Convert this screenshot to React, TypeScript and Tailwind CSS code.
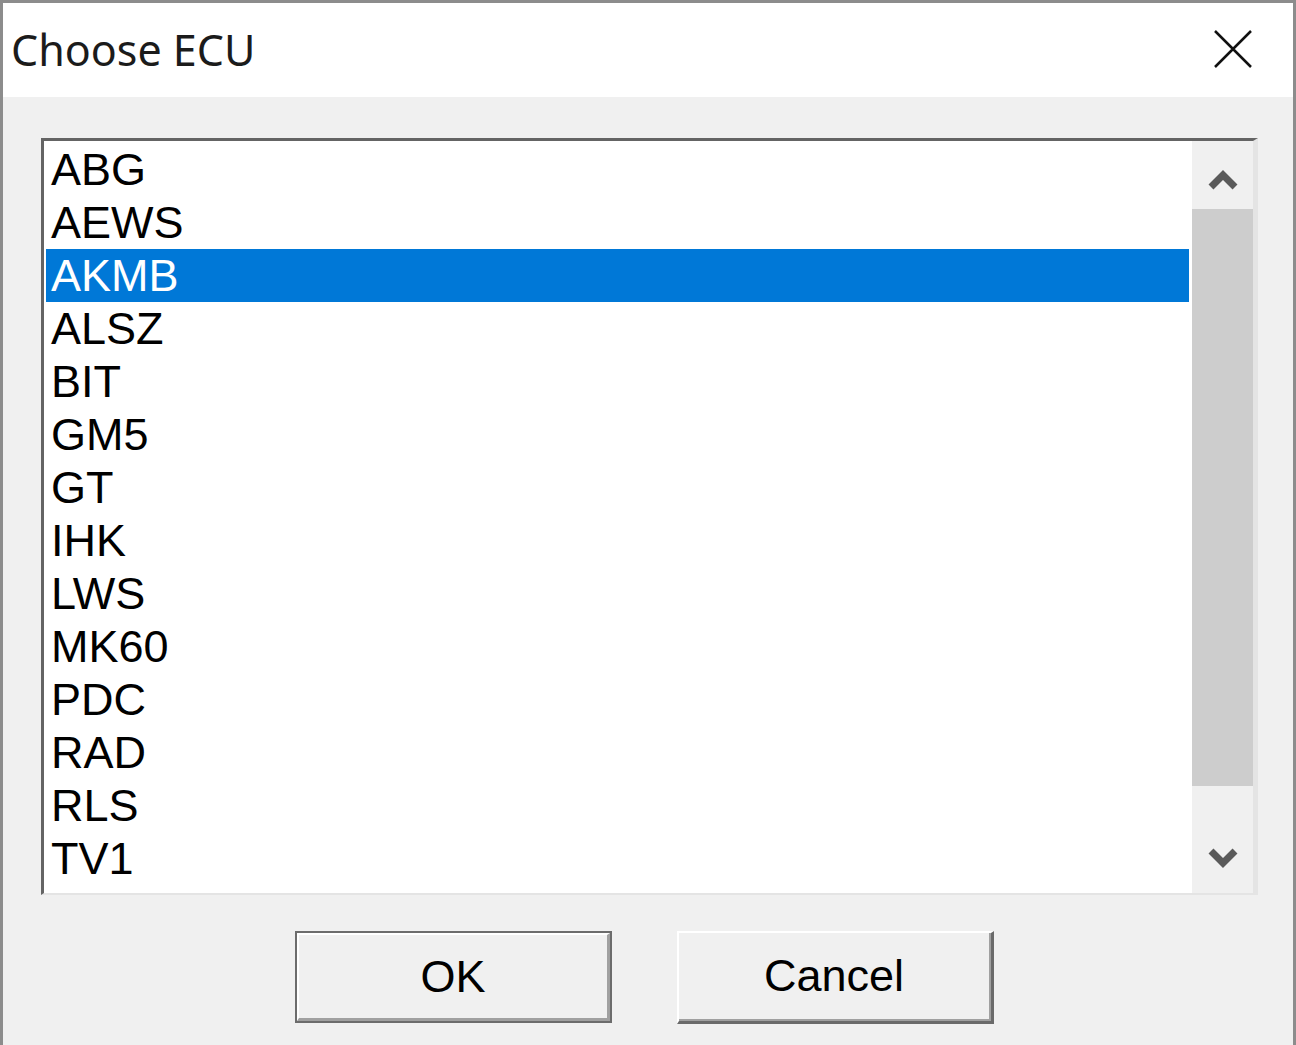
import React from 'react';

const ECUS = ['ABG', 'AEWS', 'AKMB', 'ALSZ', 'BIT', 'GM5', 'GT', 'IHK', 'LWS', 'MK60', 'PDC', 'RAD', 'RLS', 'TV1'];

function Chevron({ dir }: { dir: 'up' | 'down' }) {
  return (
    <svg width="32" height="24" viewBox="0 0 32 24">
      <path
        d={dir === 'up' ? 'M4 19 L16 7 L28 19' : 'M4 5 L16 17 L28 5'}
        fill="none"
        stroke="#5a5a5a"
        strokeWidth="7"
      />
    </svg>
  );
}

export default function App() {
  const selected = 'AKMB';

  return (
    <div className="w-[1296px] h-[1045px] bg-[#f0f0f0] border-l-[3px] border-t-[3px] border-r-[3px] border-[#8c8c8c] flex flex-col overflow-hidden">
      {/* Title bar */}
      <div className="h-[94px] bg-white flex items-center justify-between pl-[8px] pr-[41px] shrink-0">
        <span className="text-[43px] text-[#1b1b1b] leading-none -mt-[2px] font-['Noto_Sans',sans-serif]">
          Choose ECU
        </span>
        <svg width="38" height="38" viewBox="0 0 38 38" className="-mt-[2px]">
          <path d="M1 1 L37 37 M37 1 L1 37" stroke="#111" strokeWidth="2.5" />
        </svg>
      </div>

      {/* Body */}
      <div className="flex flex-col px-[38px] pt-[41px]">
        {/* List box */}
        <div className="w-[1217px] h-[757px] bg-white border-t-[3px] border-l-[3px] border-r-[5px] border-b-[2px] border-t-[#646464] border-l-[#646464] border-r-[#e4e4e4] border-b-[#e4e4e4] flex">
          <div className="flex-1 pt-[2px] pl-[2px] pr-[3px] font-['Liberation_Sans',Arial,sans-serif]">
            {ECUS.map((ecu) => (
              <div
                key={ecu}
                className={
                  ecu === selected
                    ? 'h-[53px] flex items-center pl-[5px] text-[45px] leading-none bg-[#0078d7] text-white'
                    : 'h-[53px] flex items-center pl-[5px] text-[45px] leading-none text-black'
                }
              >
                {ecu}
              </div>
            ))}
          </div>

          {/* Scrollbar */}
          <div className="w-[61px] bg-[#f0f0f0] flex flex-col">
            <div className="h-[68px] flex items-center justify-center pt-[10px]">
              <Chevron dir="up" />
            </div>
            <div className="flex-1 flex flex-col">
              <div className="h-[577px] bg-[#cdcdcd]" />
            </div>
            <div className="h-[68px] flex items-center justify-center pb-[2px]">
              <Chevron dir="down" />
            </div>
          </div>
        </div>

        {/* Buttons */}
        <div className="flex gap-[65px] mt-[36px] pl-[254px] font-['Liberation_Sans',Arial,sans-serif]">
          <div className="w-[317px] h-[92px] border-2 border-[#6c6c6c]">
            <div className="w-full h-full border-t-2 border-l-2 border-b-[3px] border-r-[3px] border-t-white border-l-white border-b-[#a0a0a0] border-r-[#a0a0a0] bg-[#f0f0f0] flex items-center justify-center text-[45px] text-black">
              OK
            </div>
          </div>
          <div className="w-[317px] h-[93px] border-t-2 border-l-2 border-b-[3px] border-r-[3px] border-t-white border-l-white border-b-[#6a6a6a] border-r-[#6a6a6a]">
            <div className="w-full h-full border-b-2 border-r-2 border-b-[#a0a0a0] border-r-[#a0a0a0] flex items-center justify-center text-[45px] text-black">
              Cancel
            </div>
          </div>
        </div>
      </div>
    </div>
  );
}
